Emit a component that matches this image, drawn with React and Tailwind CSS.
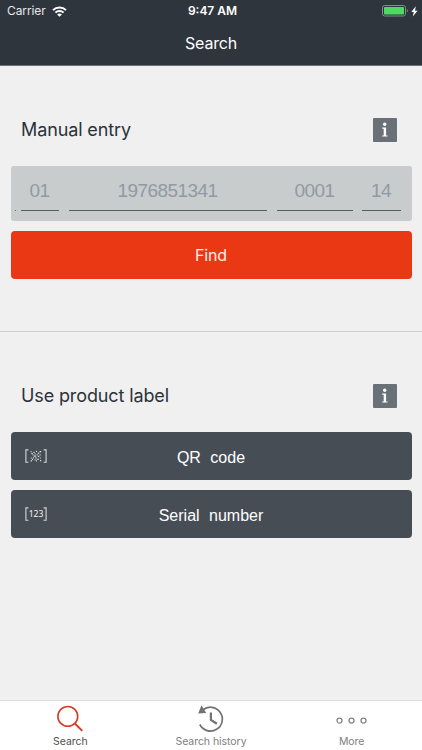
const entryFields = [
  { value: "01", className: "w-[38px] ml-[5px]" },
  { value: "1976851341", className: "w-[198px] ml-[10px]" },
  { value: "0001", className: "w-[76px] ml-[10px]" },
  { value: "14", className: "w-[39px] ml-[9px]" },
]

function StatusBar() {
  return (
    <div className="grid grid-cols-3 items-center h-[22px] pl-[7px] pr-[4px]">
      <div className="flex items-center gap-[6px]">
        <span className="text-[12px] tracking-[-0.1px] text-[#e6e8ea]">Carrier</span>
        <svg width="15" height="11" viewBox="0 0 15 11" fill="none" stroke="#fff">
          <path d="M1 4.1C4.6.5 10.4.5 14 4.1" strokeWidth="2" />
          <path d="M3.4 6.6C5.7 4.4 9.3 4.4 11.6 6.6" strokeWidth="1.9" />
          <path d="M7.5 10.8 5.1 8.4c1.3-1.2 3.5-1.2 4.8 0z" fill="#fff" stroke="none" />
        </svg>
      </div>
      <span className="text-center text-[12px] font-semibold whitespace-nowrap">9:47 AM</span>
      <div className="flex items-center justify-end gap-[3px]">
        <svg width="26" height="12" viewBox="0 0 26 12">
          <rect x="0.5" y="0.5" width="23" height="10.5" rx="2.2" fill="none" stroke="#858b90" />
          <rect x="2" y="2" width="20" height="7.6" rx="0.8" fill="#4cd964" />
          <path d="M24.8 4v3.6c1.3-.6 1.3-3 0-3.6z" fill="#858b90" />
        </svg>
        <svg width="7" height="11" viewBox="0 0 7 11" fill="#fff">
          <path d="M4.8.2.3 6h2.5l-1 4.6L6.6 4.7H4z" />
        </svg>
      </div>
    </div>
  )
}

function InfoButton() {
  return (
    <button className="flex items-center justify-center size-6 rounded-[1px] bg-[#697078]" aria-label="Info">
      <svg width="8" height="16" viewBox="0 0 8 16" fill="#fff">
        <circle cx="3.7" cy="2.3" r="1.7" />
        <path d="M1.2 5.6h3.9v7.8h1.4v1.2H1.2v-1.2h1.5V6.8H1.2z" />
      </svg>
    </button>
  )
}

function SectionHeader({ title }) {
  return (
    <div className="flex items-center justify-between h-6 pl-[21px] pr-[25px]">
      <h2 className="-mt-px text-[18px] leading-6 tracking-[-0.12px] text-[#2b3239]">{title}</h2>
      <InfoButton />
    </div>
  )
}

function Brackets() {
  return <path d="M3.4.9H.9v12.4h2.5M18.6.9h2.5v12.4h-2.5" fill="none" stroke="#d5d8da" strokeWidth="1.1" />
}

function QrIcon() {
  return (
    <svg width="23" height="14" viewBox="0 0 23 14">
      <Brackets />
      <path
        d="M5.6 2.6h1M8.4 3.4h1.2M11 2.4h1M14.6 2.6h1.6M6.4 4.6h1.4M9.6 4.8h1M12.8 4.2h1.4M7.6 6h1M11.6 5.8h1M14.6 5.8h1M8.8 7.2h2.2M12.8 7.4h1.4M5.8 9h1M8 8.8h1M10.4 9h1.6M14.8 9h1M7 10.4h1M9.6 10.8h1M12.4 10.4h1.4M5.6 11.8h1.4M11 11.8h1M15 11.6h1.2"
        fill="none"
        stroke="#dfe1e3"
        strokeWidth="1.2"
      />
    </svg>
  )
}

function SerialIcon() {
  return (
    <svg width="23" height="14" viewBox="0 0 23 14">
      <Brackets />
      <text x="11" y="10.2" textAnchor="middle" fontSize="8.6" fill="#f1f2f3" fontFamily="Noto Sans, sans-serif">
        123
      </text>
    </svg>
  )
}

function LabelButton({ icon, children }) {
  return (
    <button className="relative flex items-center justify-center w-full h-12 rounded-[4px] bg-[#474d55] text-white font-['Liberation_Sans',sans-serif] text-[16px] [word-spacing:5px]">
      <span className="absolute left-[14px] top-[17px]">{icon}</span>
      <span className="pt-[3px]">{children}</span>
    </button>
  )
}

function SearchIcon() {
  return (
    <svg width="28" height="28" viewBox="0 0 28 28" fill="none" stroke="#d43d20">
      <circle cx="11.8" cy="11.4" r="9.9" strokeWidth="1.6" />
      <path d="m18.9 18.5 7.4 7.4" strokeWidth="2" />
    </svg>
  )
}

function HistoryIcon() {
  return (
    <svg width="28" height="28" viewBox="0 0 28 28" fill="none" stroke="#727272" strokeWidth="1.7">
      <path d="M5.8 5A11.9 11.9 0 1 1 2.8 19.5" />
      <path d="M4.5.2 1.2 8.4l8-.3z" fill="#727272" stroke="none" />
      <path d="M13.9 7.6V15l6 3.8" strokeWidth="2.2" />
    </svg>
  )
}

function MoreIcon() {
  return (
    <svg width="31" height="28" viewBox="0 0 31 28" fill="none" stroke="#858585" strokeWidth="1.3">
      <circle cx="3.5" cy="15.6" r="2.5" />
      <circle cx="15.5" cy="15.6" r="2.5" />
      <circle cx="27.5" cy="15.6" r="2.5" />
    </svg>
  )
}

function Tab({ icon, label, active }) {
  return (
    <button className="flex flex-col items-center pt-[4px]">
      {icon}
      <span className={`mt-[2px] text-[10.5px] leading-[13px] tracking-[-0.05px] ${active ? "text-[#505050]" : "text-[#808080]"}`}>
        {label}
      </span>
    </button>
  )
}

export default function App() {
  return (
    <div className="flex flex-col w-[422px] h-[750px] overflow-hidden bg-[#f0f0f0] font-['Inter',sans-serif]">
      <header className="h-[66px] shrink-0 bg-[#2f353d] border-b border-[#6b7075] text-white">
        <StatusBar />
        <h1 className="text-center text-[16px] leading-[43px] tracking-[-0.2px]">Search</h1>
      </header>

      <main className="flex-1">
        {/* Manual entry */}
        <section className="h-[266px] pt-[52px] border-b border-[#cccdce]">
          <SectionHeader title="Manual entry" />
          <div className="px-[10.5px] pt-[24px]">
            <div className="flex h-[55px] pl-[4px] rounded-[3px] bg-[#c8cccc]">
              <span className="w-px h-[44.5px] border-b border-[#62676b]" />
              {entryFields.map((field) => (
                <div key={field.value} className={field.className}>
                  <div className="h-[44.5px] pt-[9px] border-b border-[#555b60] text-center font-['Liberation_Sans',sans-serif] text-[19px] leading-[32px] tracking-[-0.55px] text-[#9299a5]">
                    {field.value}
                  </div>
                </div>
              ))}
            </div>
            <button className="block w-full h-12 mt-[10px] rounded-[4px] bg-[#ea3714] text-[16px] tracking-[-0.2px] text-[#fff0eb]">
              Find
            </button>
          </div>
        </section>

        {/* Product label */}
        <section className="pt-[52px]">
          <SectionHeader title="Use product label" />
          <div className="flex flex-col gap-[10px] px-[10.5px] pt-[24px]">
            <LabelButton icon={<QrIcon />}>QR code</LabelButton>
            <LabelButton icon={<SerialIcon />}>Serial number</LabelButton>
          </div>
        </section>
      </main>

      <nav className="grid grid-cols-3 h-[50px] shrink-0 bg-white border-t border-[#dedede]">
        <Tab icon={<SearchIcon />} label="Search" active />
        <Tab icon={<HistoryIcon />} label="Search history" />
        <Tab icon={<MoreIcon />} label="More" />
      </nav>
    </div>
  )
}
